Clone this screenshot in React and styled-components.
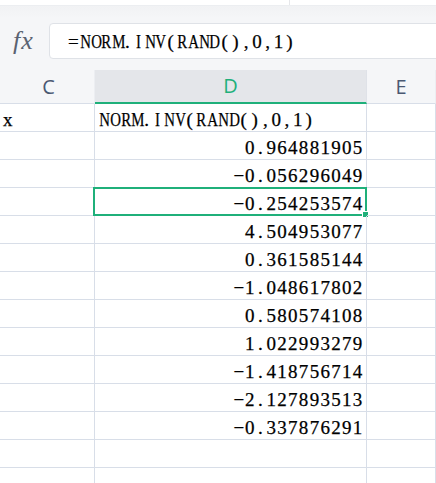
import React from 'react'
import styled, { createGlobalStyle } from 'styled-components'

const GREEN = '#1fb07a'
const LINE = '#d8dee8'

const GlobalStyle = createGlobalStyle`
  html, body {
    margin: 0;
    padding: 0;
    background: #fff;
    overflow: hidden;
  }
`

const Page = styled.div`
  width: 436px;
  height: 483px;
  overflow: hidden;
  display: flex;
  flex-direction: column;
  background: #fff;
  & > * {
    flex-shrink: 0;
  }
`

const TopStrip = styled.div`
  height: 5px;
  display: flex;
  background: #fff;
  border-bottom: 1px solid #eceef1;
`

const TabEdge = styled.div`
  width: 289px;
  border-right: 1px solid #e6e7ea;
`

const FormulaBar = styled.div`
  height: 64px;
  display: flex;
  align-items: flex-start;
  padding: 17px 0 0 13px;
  box-sizing: border-box;
  background: linear-gradient(#f1f2f4, #f5f6f8 12px);
`

const FxIcon = styled.div`
  width: 36px;
  height: 36px;
  display: flex;
  align-items: center;
  font-family: 'Liberation Serif', serif;
  font-style: italic;
  font-size: 26px;
  color: #5a6271;
  letter-spacing: 1px;
`

const FormulaInput = styled.div`
  flex: 1;
  height: 36px;
  box-sizing: border-box;
  margin-right: -6px;
  background: #fff;
  border: 1px solid #dfe2e7;
  border-radius: 4px;
  display: flex;
  align-items: center;
  padding-left: 18px;
  padding-top: 1px;
  font-family: 'Liberation Serif', serif;
  font-size: 19px;
  color: #000;
  -webkit-text-stroke: 0.25px #000;
  white-space: nowrap;
`

const Grid = styled.div`
  display: grid;
  grid-template-columns: 95px 272px 1fr;
  grid-auto-rows: 28px;
  grid-template-rows: 34px;
`

const Head = styled.div`
  box-sizing: border-box;
  background: ${p => (p.$active ? '#e4e6ea' : '#f5f6f8')};
  border-right: 1px solid ${p => (p.$active ? '#dfe2e8' : '#eceef2')};
  border-bottom: ${p => (p.$active ? `2px solid ${GREEN}` : `1px solid ${LINE}`)};
  display: flex;
  align-items: center;
  justify-content: center;
  padding-bottom: ${p => (p.$active ? '1px' : '0')};
  padding-left: ${p => (p.$first ? '3px' : '0')};
  font-family: 'Open Sans', 'Noto Sans', sans-serif;
  font-size: 20px;
  color: ${p => (p.$active ? GREEN : '#4a5872')};
`

const Cell = styled.div`
  position: relative;
  box-sizing: border-box;
  border-right: 1px solid ${LINE};
  border-bottom: 1px solid ${LINE};
  display: flex;
  align-items: center;
  justify-content: ${p => (p.$right ? 'flex-end' : 'flex-start')};
  padding: 4px ${p => (p.$right ? '3px' : '0')} 0 ${p => (p.$indent ? '3px' : '0')};
  font-family: 'Liberation Serif', serif;
  font-size: 19px;
  color: #000;
  -webkit-text-stroke: 0.25px #000;
  white-space: nowrap;
`

const Selection = styled.div`
  position: absolute;
  top: -1px;
  left: -2px;
  right: -1px;
  bottom: -1px;
  border: 2px solid ${GREEN};
  pointer-events: none;
`

const FillHandle = styled.div`
  position: absolute;
  right: -4px;
  bottom: -4px;
  width: 5px;
  height: 5px;
  background: ${GREEN};
  border: 1px solid #fff;
`

const Ch = styled.span`
  display: inline-block;
  width: 10.8px;
  text-align: center;
  transform: ${p => (p.$narrow ? 'scaleX(0.78)' : 'none')};
`

function Mono({ text }) {
  return (
    <span>
      {text.split('').map((c, i) => (
        <Ch key={i} $narrow={/[A-Z]/.test(c)}>
          {c}
        </Ch>
      ))}
    </span>
  )
}

const values = [
  '0.964881905',
  '−0.056296049',
  '−0.254253574',
  '4.504953077',
  '0.361585144',
  '−1.048617802',
  '0.580574108',
  '1.022993279',
  '−1.418756714',
  '−2.127893513',
  '−0.337876291',
]

export default function App() {
  const rows = [
    { c: 'x', d: 'NORM.INV(RAND(),0,1)', head: true },
    ...values.map(v => ({ c: '', d: v })),
    { c: '', d: '' },
    { c: '', d: '' },
  ]
  return (
    <Page>
      <GlobalStyle />
      <TopStrip>
        <TabEdge />
      </TopStrip>
      <FormulaBar>
        <FxIcon>fx</FxIcon>
        <FormulaInput>
          <Mono text="=NORM.INV(RAND(),0,1)" />
        </FormulaInput>
      </FormulaBar>
      <Grid>
        <Head $first>C</Head>
        <Head $active>D</Head>
        <Head>E</Head>
        {rows.map((r, i) => (
          <React.Fragment key={i}>
            <Cell $indent>{r.c}</Cell>
            <Cell $right={!r.head} $indent={r.head}>
              {r.d && <Mono text={r.d} />}
              {i === 3 && (
                <Selection>
                  <FillHandle />
                </Selection>
              )}
            </Cell>
            <Cell />
          </React.Fragment>
        ))}
      </Grid>
    </Page>
  )
}
